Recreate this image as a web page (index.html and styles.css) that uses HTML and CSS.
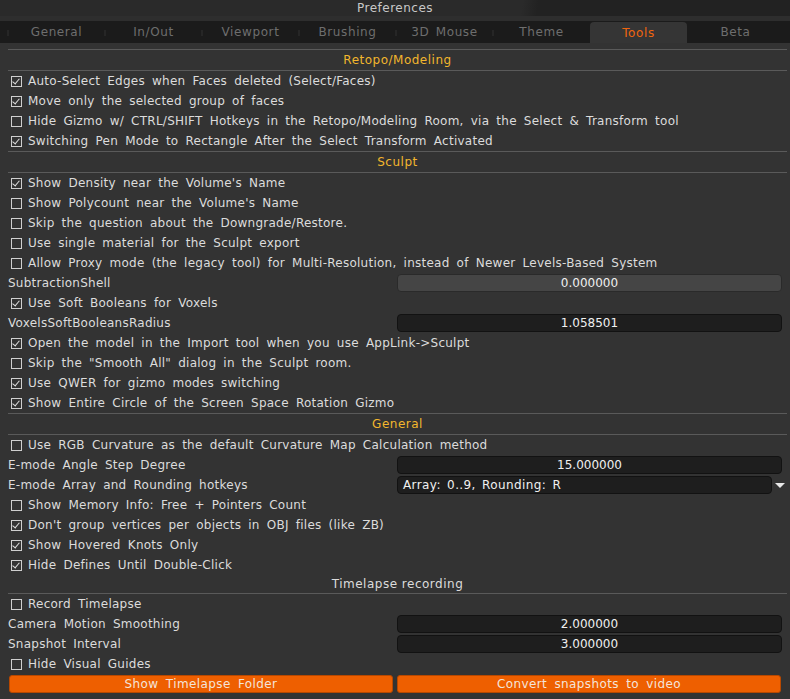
FILE: index.html
```html
<!DOCTYPE html>
<html lang="en">
<head>
  <meta charset="UTF-8">
  <title>Preferences</title>
  <link rel="stylesheet" href="styles.css">
</head>
<body>
  <div class="window">
    <div class="titlebar">Preferences</div>

    <div class="tabs">
      <div class="tab">General</div>
      <div class="tab">In/Out</div>
      <div class="tab">Viewport</div>
      <div class="tab">Brushing</div>
      <div class="tab">3D Mouse</div>
      <div class="tab">Theme</div>
      <div class="tab active">Tools</div>
      <div class="tab">Beta</div>
    </div>

    <div class="content">
      <div class="section">Retopo/Modeling</div>
      <div class="row"><span class="check on"></span>Auto-Select Edges when Faces deleted (Select/Faces)</div>
      <div class="row"><span class="check on"></span>Move only the selected group of faces</div>
      <div class="row"><span class="check"></span>Hide Gizmo w/ CTRL/SHIFT Hotkeys in the Retopo/Modeling Room, via the Select &amp; Transform tool</div>
      <div class="row"><span class="check on"></span>Switching Pen Mode to Rectangle After the Select Transform Activated</div>

      <div class="section">Sculpt</div>
      <div class="row"><span class="check on"></span>Show Density near the Volume's Name</div>
      <div class="row"><span class="check"></span>Show Polycount near the Volume's Name</div>
      <div class="row"><span class="check"></span>Skip the question about the Downgrade/Restore.</div>
      <div class="row"><span class="check"></span>Use single material for the Sculpt export</div>
      <div class="row"><span class="check"></span>Allow Proxy mode (the legacy tool) for Multi-Resolution, instead of Newer Levels-Based System</div>
      <div class="row field-row">
        <span class="label">SubtractionShell</span>
        <span class="field dim">0.000000</span>
      </div>
      <div class="row"><span class="check on"></span>Use Soft Booleans for Voxels</div>
      <div class="row field-row">
        <span class="label">VoxelsSoftBooleansRadius</span>
        <span class="field">1.058501</span>
      </div>
      <div class="row"><span class="check on"></span>Open the model in the Import tool when you use AppLink-&gt;Sculpt</div>
      <div class="row"><span class="check"></span>Skip the "Smooth All" dialog in the Sculpt room.</div>
      <div class="row"><span class="check on"></span>Use QWER for gizmo modes switching</div>
      <div class="row"><span class="check on"></span>Show Entire Circle of the Screen Space Rotation Gizmo</div>

      <div class="section">General</div>
      <div class="row"><span class="check"></span>Use RGB Curvature as the default Curvature Map Calculation method</div>
      <div class="row field-row">
        <span class="label">E-mode Angle Step Degree</span>
        <span class="field">15.000000</span>
      </div>
      <div class="row field-row">
        <span class="label">E-mode Array and Rounding hotkeys</span>
        <span class="field combo">Array: 0..9, Rounding: R</span>
        <span class="arrow"></span>
      </div>
      <div class="row"><span class="check"></span>Show Memory Info: Free + Pointers Count</div>
      <div class="row"><span class="check on"></span>Don't group vertices per objects in OBJ files (like ZB)</div>
      <div class="row"><span class="check on"></span>Show Hovered Knots Only</div>
      <div class="row"><span class="check on"></span>Hide Defines Until Double-Click</div>

      <div class="section plain">Timelapse recording</div>
      <div class="row"><span class="check"></span>Record Timelapse</div>
      <div class="row field-row">
        <span class="label">Camera Motion Smoothing</span>
        <span class="field">2.000000</span>
      </div>
      <div class="row field-row">
        <span class="label">Snapshot Interval</span>
        <span class="field">3.000000</span>
      </div>
      <div class="row"><span class="check"></span>Hide Visual Guides</div>

      <div class="buttons">
        <button class="btn">Show Timelapse Folder</button>
        <button class="btn">Convert snapshots to video</button>
      </div>
    </div>
  </div>
</body>
</html>
```

FILE: styles.css
```css
body {
  margin: 0;
  background-color: #333333;
  font-family: "DejaVu Sans", sans-serif;
  font-size: 12px;
  color: #dcdcdc;
}

.window {
  width: 790px;
  height: 699px;
  overflow: hidden;
  background-color: #333333;
}

.titlebar {
  height: 16px;
  line-height: 16px;
  text-align: center;
  color: #c8c8c8;
  letter-spacing: 0.5px;
  background: linear-gradient(100deg, #2a2a2a 0%, #2a2a2a 66%, #222222 68%, #222222 100%);
  border-bottom: 5px solid #2e2e2e;
}

.tabs {
  display: flex;
  height: 22px;
  padding: 0 6px 0 8px;
  background-color: #1b1b1b;
}

.tab {
  width: 97px;
  line-height: 23px;
  text-align: center;
  color: #6e6e6e;
  letter-spacing: 0.6px;
  word-spacing: 2px;
  position: relative;
}

.tab::before {
  content: "";
  position: absolute;
  left: -1px;
  top: 9px;
  width: 2px;
  height: 6px;
  background-color: #262626;
}

.tab.active {
  background-color: #353535;
  color: #f0650f;
  border-radius: 4px 4px 0 0;
  margin-top: 1px;
  line-height: 22px;
}

.tab.active::before,
.tab.active + .tab::before {
  display: none;
}

.content {
  padding: 6px 3px 0 8px;
}

.section {
  height: 20px;
  line-height: 21px;
  text-align: center;
  color: #f2b62d;
  letter-spacing: 0.5px;
  border-top: 1px solid #5a5a5a;
  border-bottom: 1px solid #5a5a5a;
}

.section.plain {
  color: #dcdcdc;
  border-top: none;
  height: 18px;
  line-height: 19px;
}

.row {
  display: flex;
  align-items: center;
  height: 20px;
  white-space: nowrap;
  letter-spacing: 0.25px;
  word-spacing: 3px;
}

.check {
  width: 9px;
  height: 9px;
  margin: 0 6px 0 3px;
  border: 1px solid #cfcfcf;
  position: relative;
  flex: none;
}

.check.on::after {
  content: "";
  position: absolute;
  left: 2px;
  top: 0;
  width: 3px;
  height: 6px;
  border-right: 1px solid #e0e0e0;
  border-bottom: 1px solid #e0e0e0;
  transform: rotate(40deg);
}

.field-row .label {
  width: 389px;
  flex: none;
}

.field {
  width: 383px;
  height: 16px;
  line-height: 16px;
  text-align: center;
  color: #f0f0f0;
  background-color: #1e1e1e;
  border: 1px solid #121212;
  border-radius: 4px;
  letter-spacing: 0;
  word-spacing: 0;
}

.field.dim {
  background-color: #454545;
  border-color: #2a2a2a;
}

.field.combo {
  width: 368px;
  padding-left: 5px;
  text-align: left;
  letter-spacing: 0.4px;
  word-spacing: 2px;
}

.arrow {
  margin-left: 3px;
  width: 0;
  height: 0;
  border-left: 5px solid transparent;
  border-right: 5px solid transparent;
  border-top: 5px solid #e8e8e8;
}

.buttons {
  display: flex;
  gap: 4px;
  padding: 1px 0 0 1px;
}

.btn {
  width: 384px;
  height: 18px;
  padding: 0;
  border: 1px solid #b84800;
  border-radius: 3px;
  background-color: #ee5f00;
  color: #f4e4da;
  font-family: "DejaVu Sans", sans-serif;
  font-size: 12px;
  letter-spacing: 0.4px;
  word-spacing: 3px;
}
```
